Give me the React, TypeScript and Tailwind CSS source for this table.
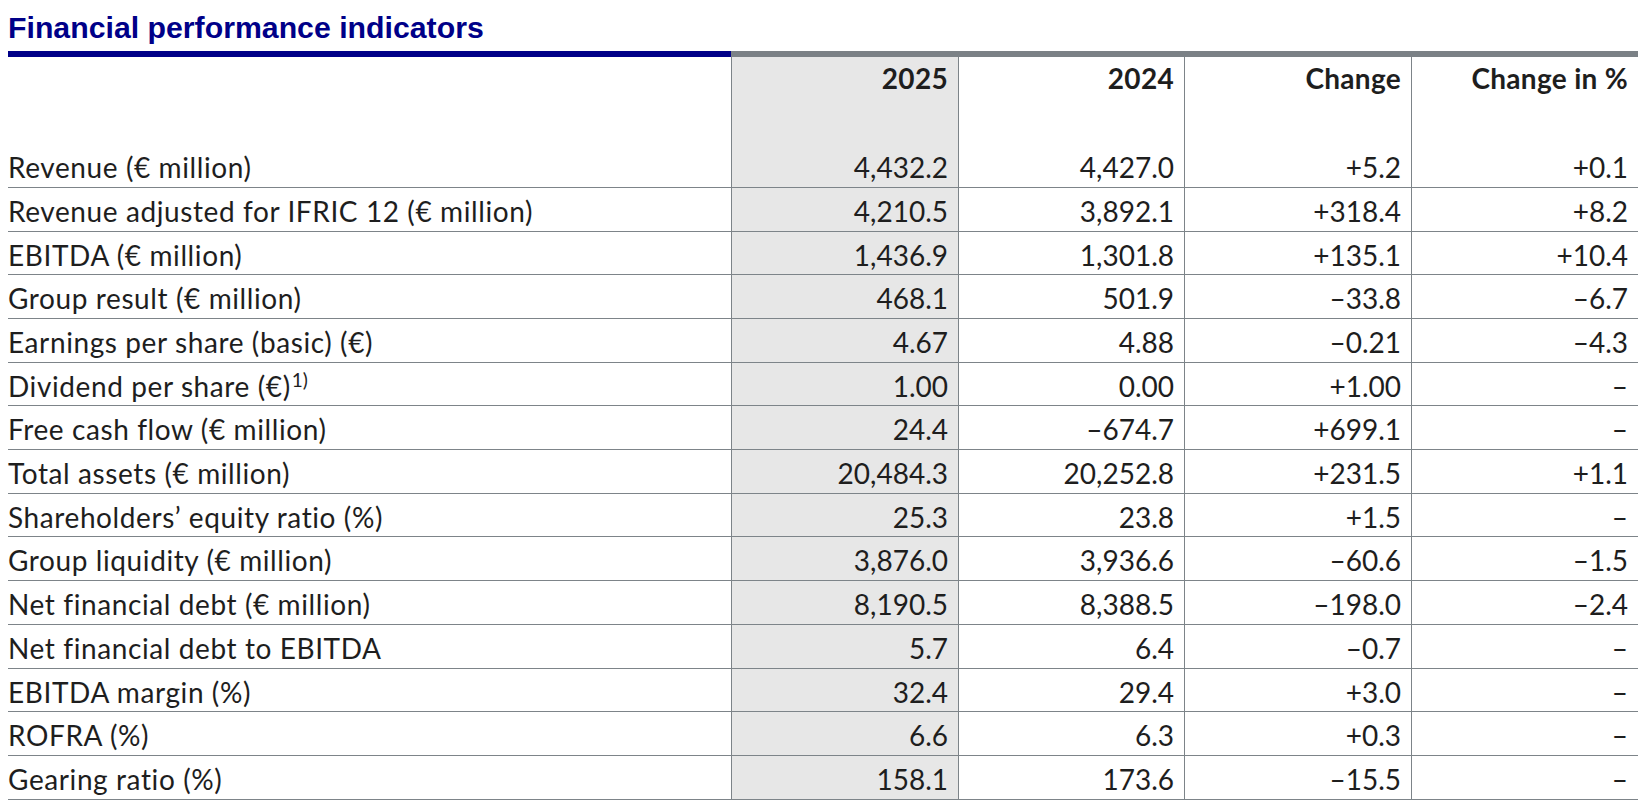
const rows = [
  { label: "Revenue (€ million)", y25: "4,432.2", y24: "4,427.0", change: "+5.2", pct: "+0.1" },
  { label: "Revenue adjusted for IFRIC 12 (€ million)", y25: "4,210.5", y24: "3,892.1", change: "+318.4", pct: "+8.2" },
  { label: "EBITDA (€ million)", y25: "1,436.9", y24: "1,301.8", change: "+135.1", pct: "+10.4" },
  { label: "Group result (€ million)", y25: "468.1", y24: "501.9", change: "–33.8", pct: "–6.7" },
  { label: "Earnings per share (basic) (€)", y25: "4.67", y24: "4.88", change: "–0.21", pct: "–4.3" },
  { label: "Dividend per share (€)", note: "1)", y25: "1.00", y24: "0.00", change: "+1.00", pct: "–" },
  { label: "Free cash flow (€ million)", y25: "24.4", y24: "–674.7", change: "+699.1", pct: "–" },
  { label: "Total assets (€ million)", y25: "20,484.3", y24: "20,252.8", change: "+231.5", pct: "+1.1" },
  { label: "Shareholders’ equity ratio (%)", y25: "25.3", y24: "23.8", change: "+1.5", pct: "–" },
  { label: "Group liquidity (€ million)", y25: "3,876.0", y24: "3,936.6", change: "–60.6", pct: "–1.5" },
  { label: "Net financial debt (€ million)", y25: "8,190.5", y24: "8,388.5", change: "–198.0", pct: "–2.4" },
  { label: "Net financial debt to EBITDA", y25: "5.7", y24: "6.4", change: "–0.7", pct: "–" },
  { label: "EBITDA margin (%)", y25: "32.4", y24: "29.4", change: "+3.0", pct: "–" },
  { label: "ROFRA (%)", y25: "6.6", y24: "6.3", change: "+0.3", pct: "–" },
  { label: "Gearing ratio (%)", y25: "158.1", y24: "173.6", change: "–15.5", pct: "–" },
];

const gridCols = "grid grid-cols-[723px_227px_226px_227px_227px]";
const numCell = "border-l border-[#7d8489] pr-[10px] text-right";

const App = () => {
  return (
    <div className="min-h-screen bg-white pl-2 text-[#1e1e1e]">
      {/* Title */}
      <h1 className="pt-[13px] font-['Liberation_Sans',Arial,sans-serif] text-[30.25px] font-bold leading-[30px] text-[#000088]">
        Financial performance indicators
      </h1>
      <div className="mt-[8px] flex w-[1630px]">
        <div className="h-[6px] w-[723px] bg-[#000088]" />
        <div className="h-[6px] flex-1 bg-[#7b8186]" />
      </div>

      <div className="w-[1630px] font-['Lato','Open_Sans',sans-serif] text-[28px] leading-[28px]">
        {/* Header */}
        <div className={`${gridCols} h-[87.3px] font-bold tracking-[0.3px]`}>
          <div />
          <div className={`${numCell} bg-[#e7e7e7] pt-[7px]`}>2025</div>
          <div className={`${numCell} pt-[7px]`}>2024</div>
          <div className={`${numCell} pt-[7px]`}>Change</div>
          <div className={`${numCell} pt-[7px]`}>Change in %</div>
        </div>

        {/* Rows */}
        {rows.map((row) => (
          <div key={row.label} className={`${gridCols} h-[43.7px] border-b border-[#7d8489]`}>
            <div className="whitespace-nowrap pt-[9px] tracking-[0.6px]">
              {row.label}
              {row.note && <sup className="ml-[1px] text-[19px] leading-none tracking-normal">{row.note}</sup>}
            </div>
            <div className={`${numCell} bg-[#e7e7e7] pt-[9px]`}>{row.y25}</div>
            <div className={`${numCell} pt-[9px]`}>{row.y24}</div>
            <div className={`${numCell} pt-[9px]`}>{row.change}</div>
            <div className={`${numCell} pt-[9px]`}>{row.pct}</div>
          </div>
        ))}
      </div>
    </div>
  );
};

export default App;
